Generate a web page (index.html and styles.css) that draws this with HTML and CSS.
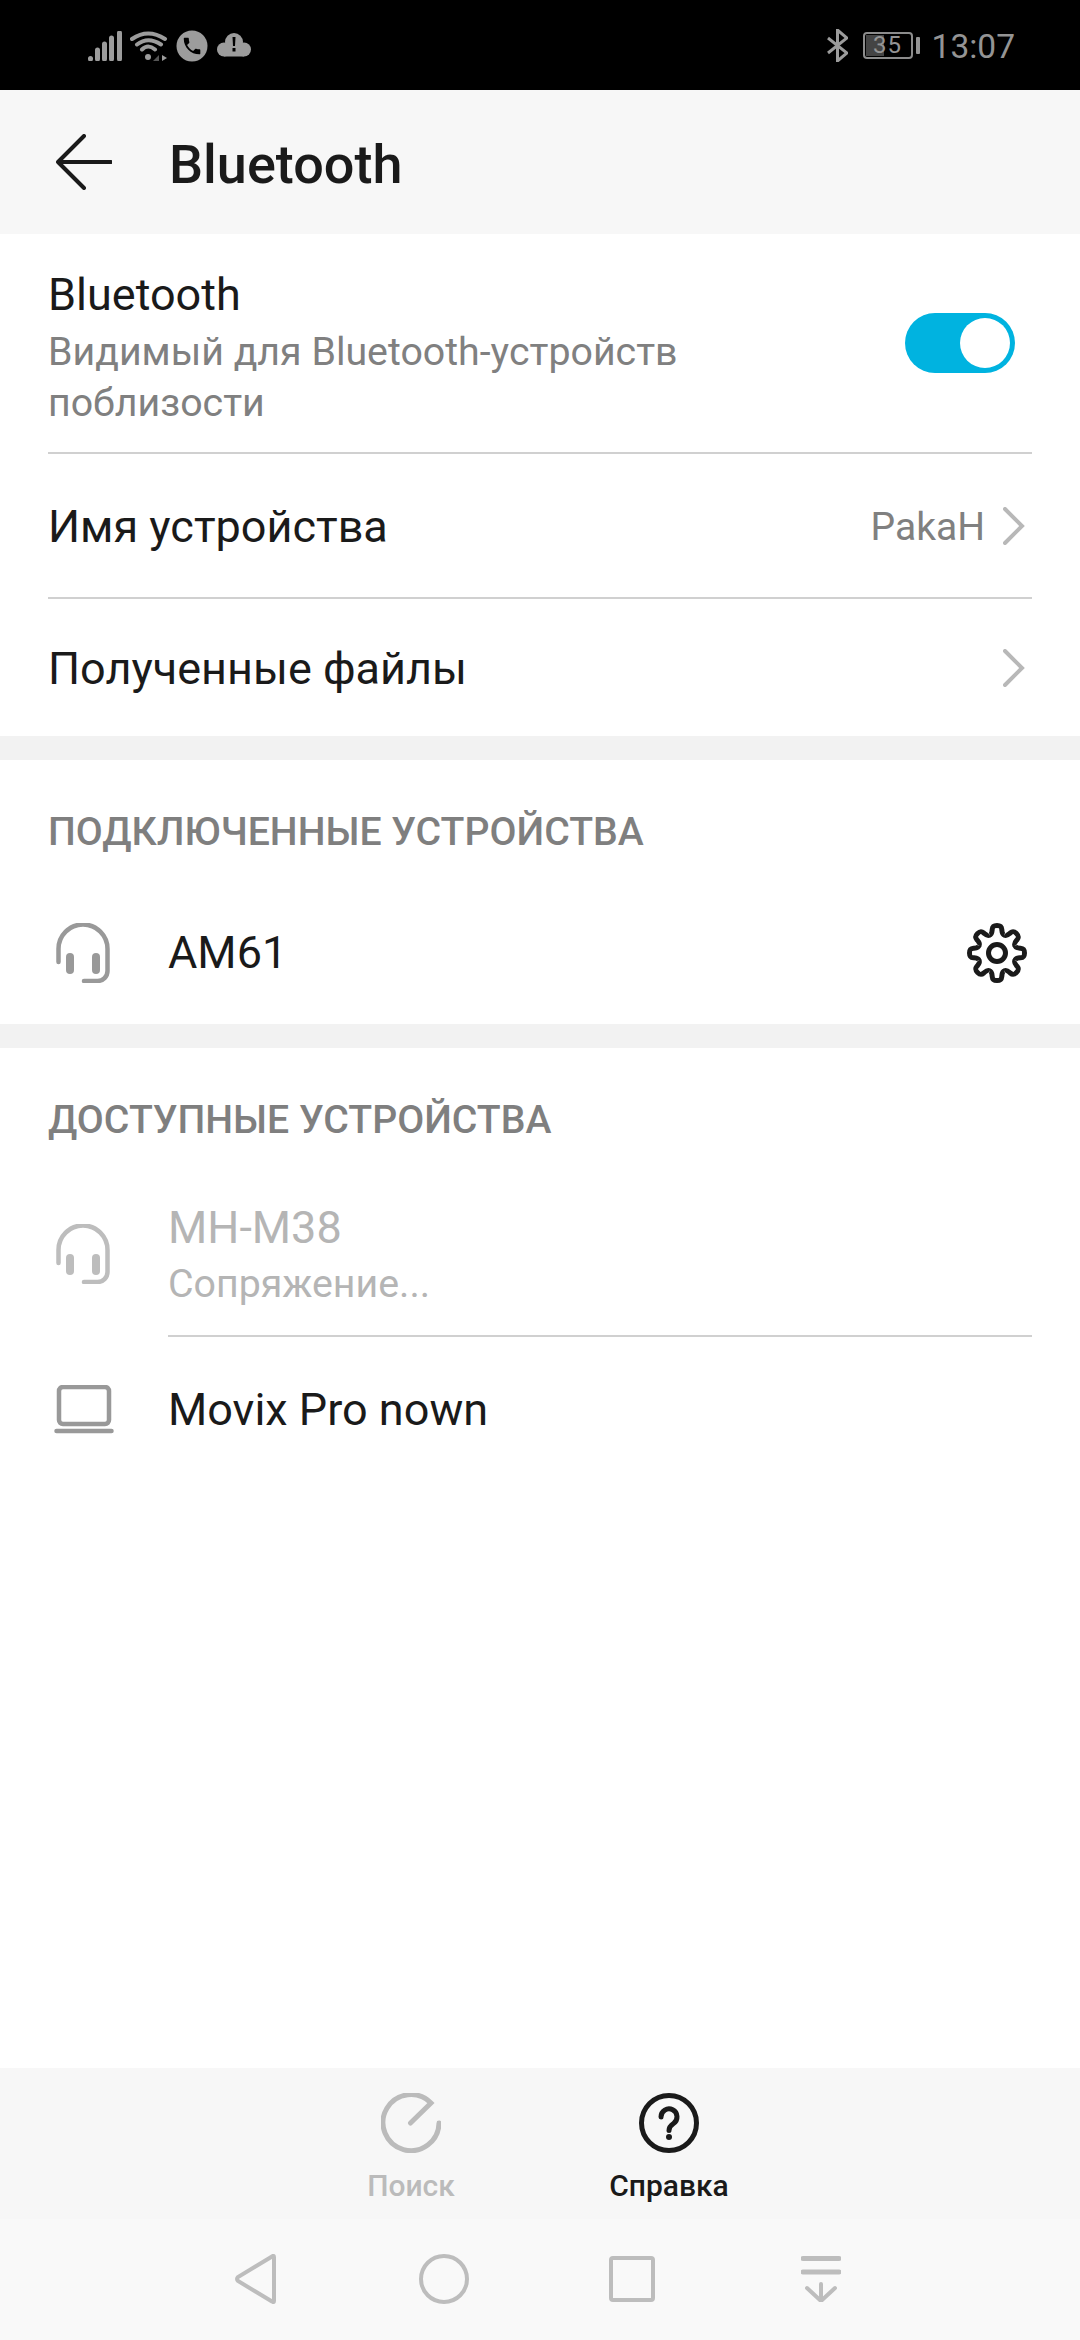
FILE: index.html
```html
<!DOCTYPE html>
<html lang="ru">
<head>
  <meta charset="UTF-8" />
  <title>Bluetooth</title>
  <link rel="stylesheet" href="styles.css">
</head>
<body>
<div class="screen">

  <!-- status bar -->
  <div class="status">
    <div class="status-left">
      <svg class="st-signal" viewBox="0 0 34 30"><path d="M2.500 28v-.500M9.500 28v-9M16.500 28v-15M23.500 28v-21M31.500 28v-26" /></svg>
      <svg class="st-wifi" viewBox="0 0 38 30">
        <path class="st-line" d="M2 8Q18-3 35 8M7 13.500Q18 5 31 13.500M12 18.500Q18 12.500 25 18.500" />
        <circle class="st-fill" cx="18" cy="26" r="3" />
        <path class="st-dim" d="M29 24v6h-6z" />
        <path class="st-fill" d="M32 24l5 3-5 3z" />
      </svg>
      <svg class="st-phone" viewBox="0 0 32 32">
        <circle class="st-fill" cx="16" cy="16" r="15.500" />
        <path class="st-cut" transform="translate(5 5) scale(.92)" d="M6.620 10.790c1.440 2.830 3.760 5.140 6.590 6.590l2.200-2.200c.270-.270.670-.360 1.020-.240 1.120.370 2.330.570 3.570.570.550 0 1 .450 1 1V20c0 .550-.450 1-1 1-9.390 0-17-7.610-17-17 0-.550.450-1 1-1h3.500c.550 0 1 .450 1 1 0 1.250.200 2.450.570 3.570.110.350.030.740-.250 1.020l-2.200 2.200z" />
      </svg>
      <svg class="st-cloud" viewBox="0 0 34 24">
        <circle class="st-fill" cx="7" cy="16.500" r="7" />
        <circle class="st-fill" cx="17" cy="9" r="9" />
        <circle class="st-fill" cx="27" cy="16.500" r="7" />
        <rect class="st-fill" x="7" y="12" width="20" height="11.500" />
        <path class="st-cut" d="M15.500 4h3l-.5 9h-2zM15.500 15h3v3.500h-3z" />
      </svg>
    </div>
    <div class="status-right">
      <svg class="st-bt" viewBox="0 0 21 33"><path d="M1 9l19 15-9.500 8V1L20 9 1 24" /></svg>
      <div class="battery">
        <div class="battery-body"><span class="battery-level"></span><span class="battery-num">35</span></div>
        <span class="battery-tip"></span>
      </div>
      <span class="clock">13:07</span>
    </div>
  </div>

  <!-- header -->
  <div class="header">
    <svg class="back" viewBox="0 0 56 56"><path d="M55 28H2M28 2L2 28l26 26" /></svg>
    <h1>Bluetooth</h1>
  </div>

  <div class="group">
    <div class="row row-main">
      <div class="row-text">
        <div class="name">Bluetooth</div>
        <div class="sub">Видимый для Bluetooth-устройств<br>поблизости</div>
      </div>
      <div class="toggle"><span class="knob"></span></div>
    </div>
    <div class="row row-device-name">
      <div class="name">Имя устройства</div>
      <span class="value">PakaH</span>
      <svg class="chevron" viewBox="0 0 22 38"><path d="M2 2l17 17L2 36" /></svg>
    </div>
    <div class="row row-files">
      <div class="name">Полученные файлы</div>
      <svg class="chevron" viewBox="0 0 22 38"><path d="M2 2l17 17L2 36" /></svg>
    </div>
  </div>

  <div class="group gap">
    <div class="group-title">ПОДКЛЮЧЕННЫЕ УСТРОЙСТВА</div>
    <div class="device device-connected">
      <svg class="dev-icon" viewBox="0 0 54 60">
        <path d="M2.500 39V26a24.500 24.500 0 0 1 49 0v22a10 10 0 0 1-10 10H28" />
        <rect x="10" y="30" width="8" height="21" rx="4" />
        <rect x="36" y="30" width="8" height="21" rx="4" />
      </svg>
      <div class="name">AM61</div>
      <svg class="gear" viewBox="0 0 60 60">
        <defs><path id="tooth" d="M22.500 12C25 11.500 25 9 25.200 6.500 25.500 3 27 2.500 30 2.500S34.500 3 34.800 6.500C35 9 35 11.500 37.500 12" /></defs>
        <use href="#tooth" />
        <use href="#tooth" transform="rotate(45 30 30)" />
        <use href="#tooth" transform="rotate(90 30 30)" />
        <use href="#tooth" transform="rotate(135 30 30)" />
        <use href="#tooth" transform="rotate(180 30 30)" />
        <use href="#tooth" transform="rotate(225 30 30)" />
        <use href="#tooth" transform="rotate(270 30 30)" />
        <use href="#tooth" transform="rotate(315 30 30)" />
        <circle cx="30" cy="30" r="8.500" />
      </svg>
    </div>
  </div>

  <div class="group gap">
    <div class="group-title">ДОСТУПНЫЕ УСТРОЙСТВА</div>
    <div class="device device-pairing">
      <svg class="dev-icon" viewBox="0 0 54 60">
        <path d="M2.500 39V26a24.500 24.500 0 0 1 49 0v22a10 10 0 0 1-10 10H28" />
        <rect x="10" y="30" width="8" height="21" rx="4" />
        <rect x="36" y="30" width="8" height="21" rx="4" />
      </svg>
      <div class="device-text">
        <div class="name">MH-M38</div>
        <div class="sub">Сопряжение...</div>
      </div>
    </div>
    <div class="device device-laptop">
      <svg class="laptop" viewBox="0 0 60 50">
        <rect x="5" y="2" width="50" height="37" rx="4" />
        <path d="M2.500 46h55" />
      </svg>
      <div class="name">Movix Pro nown</div>
    </div>
  </div>

  <div class="bottom">
    <div class="tabs">
      <div class="tab tab-off">
        <svg viewBox="0 0 60 60"><path d="M29.500 30L50 10A28 28 0 1 0 58 30" /></svg>
        <span>Поиск</span>
      </div>
      <div class="tab">
        <svg viewBox="0 0 60 60">
          <circle cx="30" cy="30" r="27.500" />
          <path d="M22 24a8 8 0 1 1 12.500 6.500c-3 2-4.500 3.500-4.500 7" />
          <circle class="dot" cx="30" cy="44" r="3" />
        </svg>
        <span>Справка</span>
      </div>
    </div>
    <div class="nav">
      <svg class="nav-back" viewBox="0 0 43 50"><path d="M40 3v44q0 2-2 .500L4 27q-2-2 0-4L38 2.500q2-1.500 2 .500z" /></svg>
      <svg class="nav-home" viewBox="0 0 50 50"><circle cx="25" cy="25" r="23" /></svg>
      <svg class="nav-recent" viewBox="0 0 46 46"><rect x="2" y="2" width="42" height="42" rx="2" /></svg>
      <svg class="nav-notif" viewBox="0 0 40 46"><path class="nav-bars" d="M2 2.500h36M2 16h36" /><path d="M20 28v17M6 32l14 13 14-13" /></svg>
    </div>
  </div>
</div>
</body>
</html>
```

FILE: styles.css
```css
* {
  box-sizing: border-box;
}
body {
  margin: 0;
  background: #fff;
  font-family: Roboto, "Noto Sans", sans-serif;
  color: #1a1a1a;
}
svg {
  display: block;
  flex: none;
  fill: none;
}
.screen {
  width: 1080px;
  height: 2340px;
  display: flex;
  flex-direction: column;
  overflow: hidden;
}

/* status bar */
.status {
  height: 90px;
  background: #000;
  color: #949494;
  display: flex;
  justify-content: space-between;
  padding: 0 65px 0 88px;
}
.status-left,
.status-right {
  display: flex;
  align-items: center;
}
.st-fill { fill: #9c9c9c; }
.st-dim { fill: #555; }
.st-cut { fill: #000; }
.st-line { stroke: #9c9c9c; stroke-width: 4; stroke-linecap: round; }
.st-signal {
  width: 34px;
  height: 30px;
  margin-top: 2px;
  stroke: #9c9c9c;
  stroke-width: 5;
  stroke-linecap: round;
}
.st-wifi {
  width: 38px;
  height: 30px;
  margin: 2px 0 0 8px;
}
.st-phone {
  width: 32px;
  height: 32px;
  margin: 2px 0 0 8px;
}
.st-cloud {
  width: 34px;
  height: 24px;
  margin: 0 0 0 9px;
}
.st-bt {
  width: 21px;
  height: 33px;
  stroke: #9c9c9c;
  stroke-width: 3;
}
.battery {
  display: flex;
  align-items: center;
  gap: 3px;
  margin-left: 15px;
}
.battery-body {
  position: relative;
  width: 50px;
  height: 27px;
  border: 2px solid #8c8c8c;
  border-radius: 4px;
  display: flex;
  align-items: center;
  justify-content: center;
}
.battery-level {
  position: absolute;
  left: 1px;
  top: 1px;
  bottom: 1px;
  width: 18px;
  background: #444;
}
.battery-num {
  position: relative;
  font-size: 24px;
  letter-spacing: 1px;
}
.battery-tip {
  width: 4px;
  height: 17px;
  background: #949494;
  border-radius: 1px;
}
.clock {
  font-size: 33.500px;
  margin-left: 12px;
  padding-top: 2px;
}

/* header */
.header {
  height: 144px;
  background: #f7f7f7;
  display: flex;
  align-items: center;
  padding-left: 56px;
}
.back {
  width: 56px;
  height: 56px;
  stroke: #1a1a1a;
  stroke-width: 4;
  stroke-linecap: round;
  stroke-linejoin: round;
}
.header h1 {
  margin: 0 0 0 57px;
  padding-top: 4px;
  font-size: 54px;
  font-weight: 500;
}

/* list */
.group {
  background: #fff;
}
.gap {
  border-top: 24px solid #f2f2f2;
}
.row {
  margin: 0 48px;
  display: flex;
  align-items: center;
  border-bottom: 2px solid #d0d0d0;
}
.row-main {
  height: 220px;
}
.row-device-name {
  height: 145px;
  padding-top: 2px;
}
.row-files {
  height: 137px;
  padding-top: 2px;
  border-bottom: none;
}
.row-text {
  flex: 1;
  margin-top: 12px;
}
.name {
  font-size: 45px;
  line-height: 52px;
}
.row-device-name .name,
.row-files .name {
  flex: 1;
}
.sub {
  font-size: 39.300px;
  line-height: 51px;
  margin-top: 6px;
  color: #808080;
}
.toggle {
  width: 110px;
  height: 60px;
  border-radius: 30px;
  background: #00b3e0;
  padding: 5px;
  margin-right: 17px;
  margin-bottom: 0;
  display: flex;
  justify-content: flex-end;
}
.knob {
  width: 50px;
  height: 50px;
  border-radius: 50%;
  background: #fff;
}
.value {
  font-size: 39px;
  color: #808080;
  margin-right: 18px;
}
.chevron {
  width: 22px;
  height: 38px;
  margin-right: 7px;
  margin-top: -2px;
  stroke: #b8b8b8;
  stroke-width: 4;
  stroke-linecap: round;
}
.group-title {
  font-size: 39.200px;
  font-weight: 500;
  color: #7f7f7f;
  padding: 48px 48px 0;
  line-height: 48px;
}
.device {
  display: flex;
  align-items: center;
  padding: 0 48px 0 56px;
}
.dev-icon {
  width: 54px;
  height: 60px;
  stroke: #999;
  stroke-width: 4.500;
  stroke-linecap: round;
}
.dev-icon rect {
  fill: #999;
  stroke: none;
}
.device .name,
.device-text {
  margin-left: 58px;
}
.device-connected {
  height: 168px;
  padding-top: 25px;
}
.device-connected .name {
  flex: 1;
}
.gear {
  width: 60px;
  height: 60px;
  margin-right: 5px;
  stroke: #1a1a1a;
  stroke-width: 5;
}
.device-pairing {
  height: 193px;
}
.device-pairing .dev-icon {
  stroke: #bdbdbd;
  margin-top: 26px;
}
.device-pairing .dev-icon rect {
  fill: #bdbdbd;
}
.device-text {
  flex: 1;
  height: 100%;
  padding-top: 58px;
  border-bottom: 2px solid #d0d0d0;
}
.device-pairing .name {
  margin-left: 0;
  color: #b5b5b5;
}
.device-pairing .sub {
  color: #b5b5b5;
  margin-top: 5px;
}
.device-laptop {
  height: 146px;
  padding-left: 54px;
}
.device-laptop .name {
  margin-left: 54px;
}
.laptop {
  width: 60px;
  height: 50px;
  stroke: #999;
  stroke-width: 4.500;
  stroke-linecap: round;
}

/* bottom bar */
.bottom {
  margin-top: auto;
  height: 272px;
  background: #f7f7f7;
  display: flex;
  flex-direction: column;
}
.tabs {
  display: flex;
  justify-content: center;
  padding-top: 25px;
}
.tab {
  width: 258px;
  display: flex;
  flex-direction: column;
  align-items: center;
  font-size: 30px;
  font-weight: 500;
  line-height: 36px;
  gap: 15px;
}
.tab svg {
  width: 60px;
  height: 60px;
  stroke: #1a1a1a;
  stroke-width: 5;
  stroke-linecap: round;
}
.tab .dot {
  fill: #1a1a1a;
  stroke: none;
}
.tab-off {
  color: #bbb;
}
.tab-off svg {
  stroke: #bbb;
}
.nav {
  flex: 1;
  margin-top: 15px;
  background: #f9f9f9;
  display: flex;
  align-items: center;
  justify-content: center;
  padding: 0 5px 2px 0;
  gap: 140px;
}
.nav svg {
  stroke: #bdbdbd;
  stroke-width: 4;
}
.nav-back { width: 43px; height: 50px; margin-right: 2px; }
.nav-home { width: 50px; height: 50px; }
.nav-recent { width: 46px; height: 46px; margin-right: 6px; }
.nav-notif { width: 40px; height: 46px; stroke-linecap: round; stroke-linejoin: round; }
.nav .nav-bars { stroke-width: 5; }
```
